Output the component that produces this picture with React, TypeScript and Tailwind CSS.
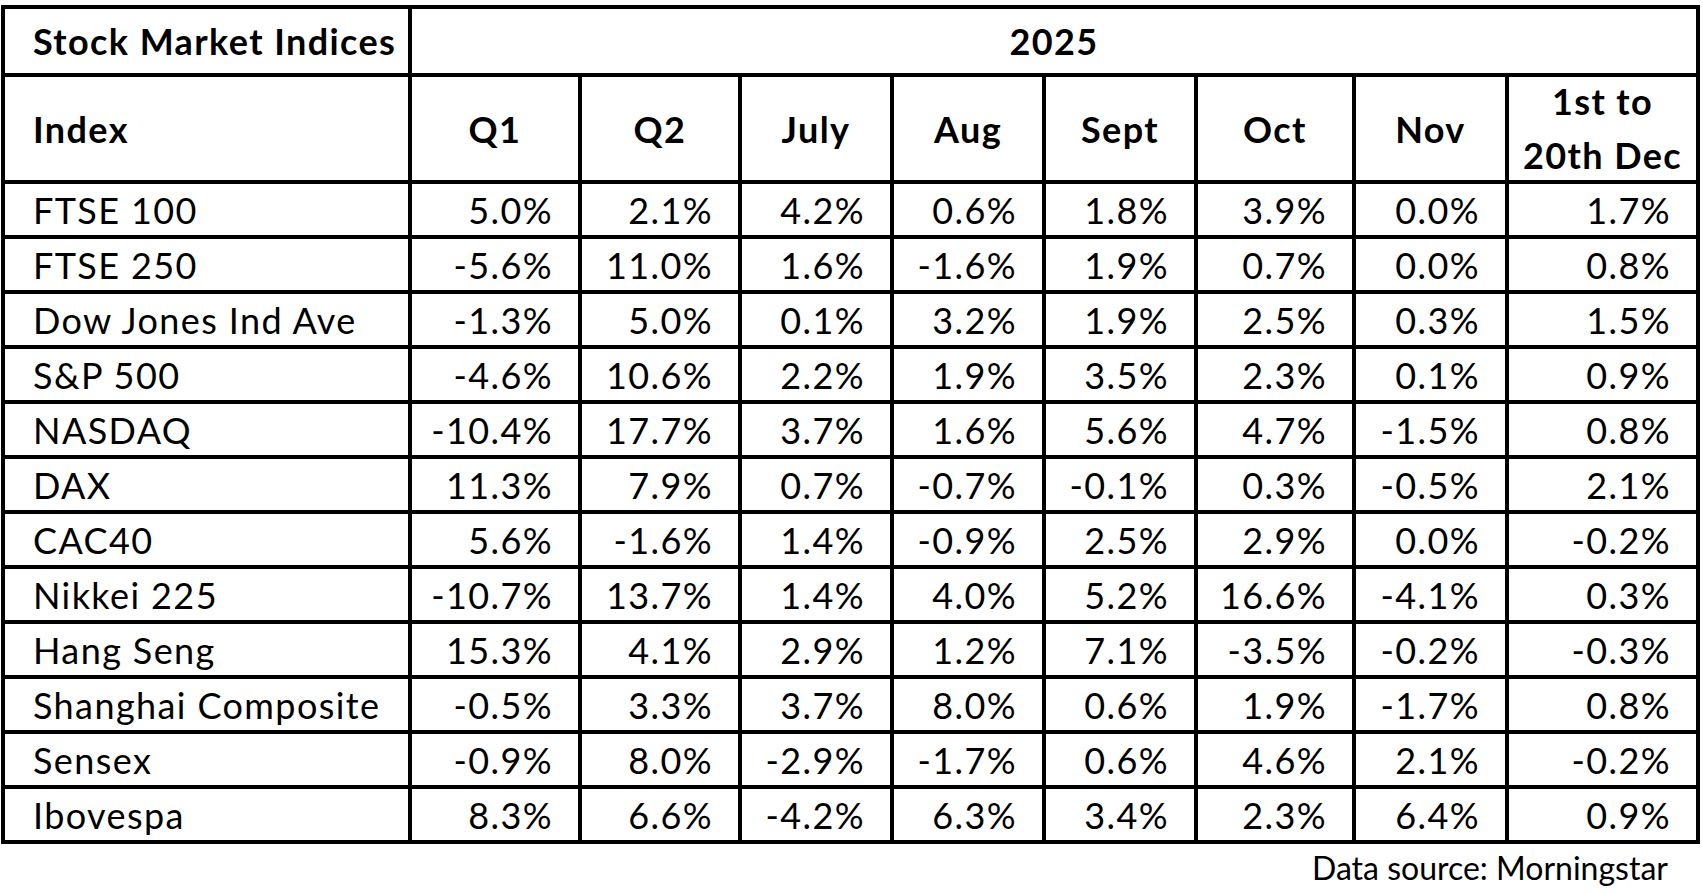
import React from 'react';

const columns = ['Q1', 'Q2', 'July', 'Aug', 'Sept', 'Oct', 'Nov'];

const rows: [string, string[]][] = [
  ['FTSE 100', ['5.0%', '2.1%', '4.2%', '0.6%', '1.8%', '3.9%', '0.0%', '1.7%']],
  ['FTSE 250', ['-5.6%', '11.0%', '1.6%', '-1.6%', '1.9%', '0.7%', '0.0%', '0.8%']],
  ['Dow Jones Ind Ave', ['-1.3%', '5.0%', '0.1%', '3.2%', '1.9%', '2.5%', '0.3%', '1.5%']],
  ['S&P 500', ['-4.6%', '10.6%', '2.2%', '1.9%', '3.5%', '2.3%', '0.1%', '0.9%']],
  ['NASDAQ', ['-10.4%', '17.7%', '3.7%', '1.6%', '5.6%', '4.7%', '-1.5%', '0.8%']],
  ['DAX', ['11.3%', '7.9%', '0.7%', '-0.7%', '-0.1%', '0.3%', '-0.5%', '2.1%']],
  ['CAC40', ['5.6%', '-1.6%', '1.4%', '-0.9%', '2.5%', '2.9%', '0.0%', '-0.2%']],
  ['Nikkei 225', ['-10.7%', '13.7%', '1.4%', '4.0%', '5.2%', '16.6%', '-4.1%', '0.3%']],
  ['Hang Seng', ['15.3%', '4.1%', '2.9%', '1.2%', '7.1%', '-3.5%', '-0.2%', '-0.3%']],
  ['Shanghai Composite', ['-0.5%', '3.3%', '3.7%', '8.0%', '0.6%', '1.9%', '-1.7%', '0.8%']],
  ['Sensex', ['-0.9%', '8.0%', '-2.9%', '-1.7%', '0.6%', '4.6%', '2.1%', '-0.2%']],
  ['Ibovespa', ['8.3%', '6.6%', '-4.2%', '6.3%', '3.4%', '2.3%', '6.4%', '0.9%']],
];

export default function App() {
  return (
    <div className="min-h-screen bg-white font-['Lato',sans-serif] text-[36px] tracking-[1.4px] text-black">
      <div className="ml-[1px] pt-[5px]">
        {/* black background shows through the gaps as cell borders */}
        <div className="grid w-fit grid-cols-[403px_166px_156px_148px_148px_148px_154px_149px_187px] grid-rows-[64px_103px_repeat(12,51px)] gap-[4px] bg-black p-[4px]">
          <div className="flex items-center bg-white pl-[28px] font-bold">Stock Market Indices</div>
          <div className="col-span-8 flex items-center justify-center bg-white font-bold">2025</div>

          <div className="flex items-center bg-white pl-[28px] font-bold">Index</div>
          {columns.map((c) => (
            <div key={c} className="flex items-center justify-center bg-white font-bold">
              {c}
            </div>
          ))}
          <div className="flex flex-col items-center justify-center bg-white text-center font-bold leading-[54px]">
            <span className="-mt-[2px]">1st to</span>
            <span>20th Dec</span>
          </div>

          {rows.map(([name, values]) => (
            <React.Fragment key={name}>
              <div className="flex items-center bg-white pl-[28px]">{name}</div>
              {values.map((v, i) => (
                <div key={i} className="flex items-center justify-end bg-white pr-[25px]">
                  {v}
                </div>
              ))}
            </React.Fragment>
          ))}
        </div>
        <div className="w-[1667px] pt-[2px] text-right text-[32px] leading-[44px] tracking-normal">
          Data source: Morningstar
        </div>
      </div>
    </div>
  );
}
